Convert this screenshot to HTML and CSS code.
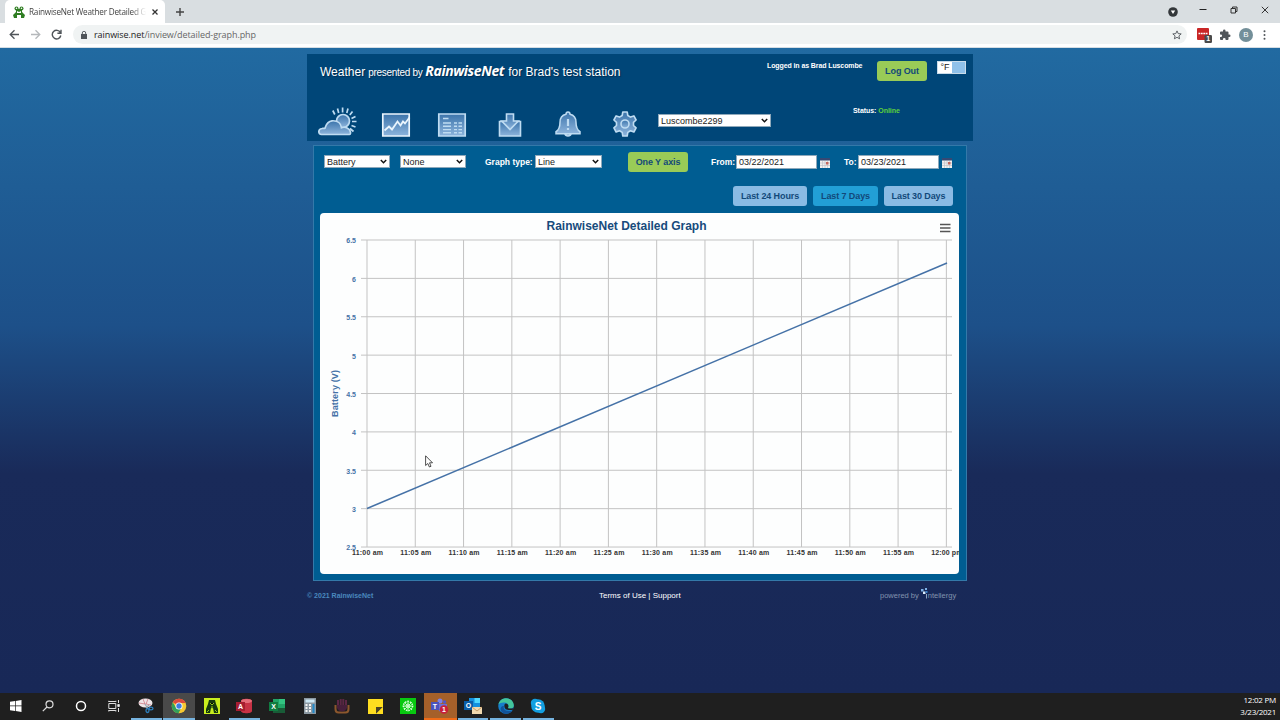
FILE: index.html
```html
<!DOCTYPE html>
<html lang="en">
<head>
    <meta charset="UTF-8">
    <title>RainwiseNet Weather Detailed Graph</title>
    <link rel="stylesheet" href="styles.css">
</head>
<body>
    <!-- Browser tabs -->
    <div class="tabstrip">
        <div class="tab">
            <svg class="favicon" width="12" height="12" viewBox="0 0 12 12"><g fill="#2f7d22"><circle cx="3.5" cy="2.5" r="2"/><circle cx="8.5" cy="2.5" r="2"/><path d="M3 3h6v3l3 3-1 3H8V9H4v3H1L0 9l3-3z"/></g><path d="M4 5l2 1 2-1v2H4z" fill="#fff"/><circle cx="3.5" cy="2.3" r=".8" fill="#fff"/><circle cx="8.5" cy="2.3" r=".8" fill="#fff"/></svg>
            <span class="tab-title">RainwiseNet Weather Detailed G</span>
            <svg width="8" height="8" viewBox="0 0 8 8" stroke="#333" stroke-width="1.3"><path d="M1.5 1.5l5 5M6.5 1.5l-5 5"/></svg>
        </div>
        <svg class="new-tab" width="10" height="10" viewBox="0 0 10 10" stroke="#444" stroke-width="1.4"><path d="M5 1v8M1 5h8"/></svg>
        <div class="window-buttons">
            <svg width="10" height="10" viewBox="0 0 10 10"><circle cx="5" cy="5" r="4.8" fill="#33373a"/><path d="M2.8 3.5h4.4L5 7z" fill="#fff"/></svg>
            <svg width="8" height="10" viewBox="0 0 8 10" stroke="#222"><path d="M.5 4.5h7"/></svg>
            <svg width="8" height="8" viewBox="0 0 8 8" fill="none" stroke="#333"><path d="M1 2.5h4.5v4.5H1zM2.5 2.5V1H7v4.5H5.5"/></svg>
            <svg width="8" height="8" viewBox="0 0 8 8" stroke="#333"><path d="M.8.8l6.4 6.4M7.2.8L.8 7.2"/></svg>
        </div>
    </div>

    <!-- Address bar -->
    <div class="toolbar">
        <svg width="11" height="11" viewBox="0 0 11 11" fill="none" stroke="#50555a" stroke-width="1.3"><path d="M10 5.5H1.5M5.5 1.2L1.2 5.5l4.3 4.3"/></svg>
        <svg width="11" height="11" viewBox="0 0 11 11" fill="none" stroke="#b5b8bb" stroke-width="1.3"><path d="M1 5.5h8.5M5.5 1.2l4.3 4.3-4.3 4.3"/></svg>
        <svg width="11" height="11" viewBox="0 0 11 11" fill="none" stroke="#50555a" stroke-width="1.4"><path d="M9.4 3.6A4.3 4.3 0 1 0 9.8 6.5M10 .7v3.5H6.4"/></svg>
        <div class="address">
            <svg width="6" height="8" viewBox="0 0 6 8"><path d="M0 3h6v5H0z" fill="#50555a"/><path d="M1.3 3V2a1.7 1.7 0 0 1 3.4 0v1" fill="none" stroke="#50555a" stroke-width=".9"/></svg>
            <span class="url"><b>rainwise.net</b>/inview/detailed-graph.php</span>
            <svg class="star" width="10" height="10" viewBox="0 0 10 10" fill="none" stroke="#50555a" stroke-width=".9"><path d="M5 .9l1.2 2.7 3 .3-2.3 2 .7 2.9L5 7.3 2.4 8.8l.7-2.9-2.3-2 3-.3z"/></svg>
        </div>
        <svg class="ext" width="16" height="16" viewBox="0 0 16 16"><rect width="12" height="12" y="1" rx="1" fill="#c92626"/><path d="M1.5 6.5h9" stroke="#fff" stroke-width="1.4" stroke-dasharray="1.8 .6"/><rect x="7.5" y="8" width="7.5" height="8" rx="1.2" fill="#4a4a4a"/><text x="11.2" y="14.4" text-anchor="middle" class="ext-count">1</text></svg>
        <svg class="puzzle" width="12" height="12" viewBox="0 0 24 24" fill="#50555a"><path d="M20.5 11H19V7a2 2 0 0 0-2-2h-4V3.5a2.5 2.5 0 0 0-5 0V5H4a2 2 0 0 0-2 2v3.8h1.5a2.7 2.7 0 0 1 0 5.4H2V20a2 2 0 0 0 2 2h3.8v-1.5a2.7 2.7 0 0 1 5.4 0V22H17a2 2 0 0 0 2-2v-4h1.5a2.5 2.5 0 0 0 0-5z"/></svg>
        <span class="profile">B</span>
        <svg width="3" height="10" viewBox="0 0 3 10" fill="#50555a"><circle cx="1.5" cy="1.3" r="1"/><circle cx="1.5" cy="5" r="1"/><circle cx="1.5" cy="8.7" r="1"/></svg>
    </div>

    <div class="page">
        <header class="header">
            <div class="header-top">
                <h1><span class="w-weather">Weather</span><span class="w-by">presented by</span><span class="w-brand">RainwiseNet</span><span class="w-station">for Brad's test station</span></h1>
                <span class="login">Logged in as Brad Luscombe</span>
                <button class="btn logout">Log Out</button>
                <div class="units"><span>°F</span><i></i></div>
            </div>
            <nav class="nav">
                <svg width="0" height="0" class="defs"><defs><linearGradient id="ice" x1="0" y1="0" x2="0" y2="1"><stop offset="0" stop-color="#3b74ab"/><stop offset="1" stop-color="#8db4dc"/></linearGradient></defs></svg>
                <svg width="40" height="30" viewBox="0 0 40 30" fill="url(#ice)" stroke="#bfdcf2" stroke-width="1.7"><circle cx="26" cy="14" r="6.5"/><path d="M15.8 3.5l2 4M20.5 1.5l1.2 4.5M25.6.5v5M31 1.5l-1.2 4.5M35.5 4.5l-2.7 3.5M38.5 9.5l-4 2M35 14.5h4.5M34.5 18.5l4 1.5M33 21.5l3.5 3"/><path d="M4.5 27.5C1 27.500.7 22 5 21.500c1-.2 2.200.2 3-.3 1-2.500 1.500-6.700 7-7.400 6-.4 9 3.200 9.500 7 3.500-1.500 8.500.5 9 4.500.1 1.200-.3 2.200-1 2.200z"/></svg>
                <svg width="28" height="24" viewBox="0 0 28 24" fill="url(#ice)" stroke="#eaf5fd" stroke-width="1.7"><path d="M.8 1h26.400v22H.8z"/><path d="M2.500 17.500l4.500-4 3 3 5.500-8 3 4 2.500-4 2 2 4.500-6" fill="none" stroke-width="1.800"/></svg>
                <svg width="28" height="24" viewBox="0 0 28 24" fill="url(#ice)" stroke="#bfdcf2" stroke-width="1.700"><path d="M.8 1h26.400v22H.8z"/><path d="M5 5.500h5.500M5 10h8M5 13.300h8M5 16.600h8M5 19.700h8M16 10h3M20.500 10h3.500M16 13.300h3M20.500 13.300h3.500M16 16.600h3M20.500 16.600h3.500M16 19.700h3M20.500 19.700h3.500" stroke-width="1.400"/></svg>
                <svg width="24" height="24" viewBox="0 0 24 24" fill="url(#ice)" stroke="#bfdcf2" stroke-width="1.600"><path d="M1.500 8.500h21V23h-21z"/><path d="M8.500 1h7v7h4.800L12 16.500 3.700 8h4.800z"/></svg>
                <svg width="26" height="26" viewBox="0 0 26 26" fill="url(#ice)" stroke="#bfdcf2" stroke-width="1.500"><path d="M11 3.200c0-3 4-3 4 0 4.500 1 6 4 6 8 0 5 1 7.500 4 9.500v2H1v-2c3-2 4-4.500 4-9.500 0-4 1.500-7 6-8z"/><path d="M10 23c.5 2.500 5.500 2.500 6 0z"/><path d="M13 8v7M13 17v2" stroke-width="2.200"/></svg>
                <svg width="26" height="26" viewBox="0 0 26 26" fill="url(#ice)" stroke="#bfdcf2" stroke-width="1.600" stroke-linejoin="round"><path d="M10.800 1h4.400l.6 3.500 2.700 1.600 3.400-1.200L24.100 9l-2.600 2.300v3.200l2.600 2.400-2.200 4.100-3.400-1.300-2.700 1.700-.6 3.600h-4.400l-.6-3.600-2.700-1.700L4.100 21l-2.200-4.100 2.600-2.400v-3.200L1.900 9l2.200-4.100 3.400 1.200 2.700-1.600z"/><circle cx="13" cy="13" r="4"/></svg>
                <div class="select station"><span>Luscombe2299</span><svg width="7" height="5" viewBox="0 0 7 5"><path d="M.8 1l2.700 2.700L6.200 1"/></svg></div>
                <div class="status">Status: <em>Online</em></div>
            </nav>
        </header>

        <main class="panel">
            <div class="filters">
                <div class="select"><span>Battery</span><svg width="7" height="5" viewBox="0 0 7 5"><path d="M.8 1l2.700 2.700L6.200 1"/></svg></div>
                <div class="select second"><span>None</span><svg width="7" height="5" viewBox="0 0 7 5"><path d="M.8 1l2.700 2.700L6.200 1"/></svg></div>
                <label class="type-label">Graph type:</label>
                <div class="select line-type"><span>Line</span><svg width="7" height="5" viewBox="0 0 7 5"><path d="M.8 1l2.700 2.700L6.200 1"/></svg></div>
                <button class="btn axis">One Y axis</button>
                <label class="from-label">From:</label>
                <div class="date">03/22/2021</div>
                <svg class="cal" width="10" height="10" viewBox="0 0 10 10"><path fill="#f2f0ee" d="M0 0h10v10H0z"/><path fill="#354873" d="M0 0h10v2.500H0z"/><path d="M0 5h10M0 7.500h10M2.500 3v7M5 3v7M7.500 3v7" stroke="#b9bdc6" stroke-width=".6"/><path fill="#c4665c" d="M6 4h2.500v2.500H6z"/></svg>
                <label class="to-label">To:</label>
                <div class="date">03/23/2021</div>
                <svg class="cal" width="10" height="10" viewBox="0 0 10 10"><path fill="#f2f0ee" d="M0 0h10v10H0z"/><path fill="#354873" d="M0 0h10v2.500H0z"/><path d="M0 5h10M0 7.500h10M2.500 3v7M5 3v7M7.500 3v7" stroke="#b9bdc6" stroke-width=".6"/><path fill="#c4665c" d="M6 4h2.500v2.500H6z"/></svg>
            </div>
            <div class="ranges">
                <button class="btn range hours">Last 24 Hours</button>
                <button class="btn range active">Last 7 Days</button>
                <button class="btn range month">Last 30 Days</button>
            </div>
            <div class="chart">
                <svg id="graph" width="639" height="361" viewBox="320 213 639 361">
                    <text class="chart-title" x="626.5" y="230" text-anchor="middle" textLength="160">RainwiseNet Detailed Graph</text>
                    <path d="M940 224.500h10.500M940 228h10.500M940 231.500h10.500" stroke="#555" stroke-width="1.700"/>
                    <g id="grid"></g>
                    <path d="M367 508.500L947 263" stroke="#4572a7" stroke-width="1.500"/>
                    <text class="axis-title" transform="translate(338 393.500) rotate(-90)" text-anchor="middle" textLength="47">Battery (V)</text>
                </svg>
            </div>
        </main>

        <footer class="footer">
            <span class="copy">© 2021 RainwiseNet</span>
            <span class="links">Terms of Use | Support</span>
            <span class="powered">powered by <svg width="7" height="11" viewBox="0 0 7 11"><path fill="#7fb2e6" d="M0 1h2.500v2.500H0zM4 0h2v2H4z"/><path fill="#dcecfb" d="M2 3.500h2.500V6H2z"/><path fill="#3d7fc4" d="M4.500 3h2v2h-2z"/><path fill="#8fa3bd" d="M5 6h1v4.500H5z"/></svg>ntellergy</span>
        </footer>
    </div>

    <!-- Taskbar -->
    <div class="taskbar">
        <div class="app"><svg width="12" height="12" viewBox="0 0 12 12" fill="#fff"><path d="M0 1.700l5-.7v4.600H0zM5.700.9L11.500 0v5.600H5.700zM0 6.300h5V11l-5-.7zM5.700 6.300h5.800V12l-5.800-.9z"/></svg></div>
        <div class="app"><svg width="12" height="12" viewBox="0 0 12 12" fill="none" stroke="#ddd" stroke-width="1.200"><circle cx="7.500" cy="4.300" r="3.500"/><path d="M5 7L.8 11.200"/></svg></div>
        <div class="app"><svg width="12" height="12" viewBox="0 0 12 12" fill="none" stroke="#fff" stroke-width="1.500"><circle cx="6" cy="6" r="4.500"/></svg></div>
        <div class="app"><svg width="12" height="12" viewBox="0 0 12 12" fill="none" stroke="#ddd"><path d="M.8 3.500h7v5h-7zM.8 2V.8M7.800 2V.8M.8 1.500h7M.8 10.500h7M.8 10v1.500M7.800 10v1.500M10.500 0v3M10.500 8v4"/><path d="M9.800 4.500h1.500v2H9.800z" fill="#fff"/></svg></div>
        <div class="app open"><svg width="16" height="16" viewBox="0 0 16 16"><ellipse cx="7.500" cy="5" rx="7" ry="4.500" fill="#eee6e8"/><path d="M5 1l2 5M10 1L8 6M1 5l6 1M8 6l5 1" stroke="#c55563" stroke-width=".6"/><path d="M7 6l3 5M11 7l-3 3" stroke="#9aa6b0" stroke-width="1.200"/><g fill="none" stroke="#2c7fbe" stroke-width="1.300"><ellipse cx="9.500" cy="12.500" rx="1.500" ry="2"/><ellipse cx="13" cy="10.500" rx="2" ry="1.300"/></g></svg></div>
        <div class="app open current"><svg width="16" height="16" viewBox="0 0 16 16"><circle cx="8" cy="8" r="7.300" fill="#f7c831"/><path d="M8 8L1.700 4.300A7.300 7.300 0 0 1 14.700 5H8z" fill="#dd4b3e"/><path d="M1.700 4.300A7.300 7.300 0 0 0 7.500 15.300L10.500 9.500 5 9.500z" fill="#33a05a"/><circle cx="8" cy="8" r="3.500" fill="#fff"/><circle cx="8" cy="8" r="2.700" fill="#3f7de0"/></svg></div>
        <div class="app"><svg width="16" height="16" viewBox="0 0 16 16"><path fill="#c9ee1e" d="M0 0h16v16H0z"/><path d="M5 2h6l1 4 2 5v4h-4l-1-5H7l-1 5H2v-4l2-5z" fill="#15390e"/><path d="M6 5l2 2 2-2M5 12l-2 2M11 12l2 2M8 8v3" stroke="#8fc51d"/></svg></div>
        <div class="app open"><svg width="16" height="16" viewBox="0 0 16 16"><path fill="#c73245" d="M5 3c0-3 11-3 11 0v10c0 3-11 3-11 0z"/><ellipse cx="10.500" cy="3" rx="5.500" ry="2" fill="#e46c79"/><path fill="#a61d31" d="M0 4h9v9H0z"/><text class="logo" x="4.500" y="11.200">A</text></svg></div>
        <div class="app"><svg width="16" height="16" viewBox="0 0 16 16"><path fill="#21a366" d="M4 1h12v14H4z"/><path fill="#33c481" d="M10 1h6v5h-6z"/><path fill="#185c37" d="M4 10h12v5H4z"/><path fill="#107c41" d="M0 4h9v9H0z"/><text class="logo" x="4.500" y="11.200">X</text></svg></div>
        <div class="app"><svg width="14" height="16" viewBox="0 0 14 16"><path fill="#8b98a2" d="M1 0h12v16H1z"/><path fill="#cce8f5" d="M2.500 1.500h9v3h-9z"/><path d="M3.500 6v9M7 6v9" stroke="#f4f4f4" stroke-width="2" stroke-dasharray="2 1"/><path d="M10.500 6v9" stroke="#2189c8" stroke-width="2"/></svg></div>
        <div class="app"><svg width="16" height="16" viewBox="0 0 16 16"><path d="M1.500 7v4q0 3.500 3 3.500h7q3 0 3-3.500V7" fill="none" stroke="#8c572d" stroke-width="2"/><path d="M4 2v7M6.700 1v8M9.300 1v8M12 2v7" stroke="#5c2745" stroke-width="2"/><path d="M3 7h10v3q-2 3.500-5 3.500T3 10z" fill="#461f3b"/></svg></div>
        <div class="app"><svg width="15" height="15" viewBox="0 0 15 15"><path fill="#ffde20" d="M0 0h15v15H0z"/><path fill="#4c4426" d="M8 8h7l-7 7z"/><path fill="#ffde20" d="M15 8v7H8z"/></svg></div>
        <div class="app"><svg width="16" height="16" viewBox="0 0 16 16" stroke="#d9ffd9" fill="none"><path fill="#08c910" stroke="none" d="M0 0h16v16H0z"/><circle cx="8" cy="8" r="2"/><circle cx="8" cy="8" r="4.500" stroke-width="1.500" stroke-dasharray="1.500 1"/><path d="M8 2.500v11M2.500 8h11M4 4l8 8M12 4l-8 8" stroke-width=".7"/></svg></div>
        <div class="app teams"><svg width="18" height="16" viewBox="0 0 18 16"><circle cx="9" cy="3" r="2.500" fill="#7b83eb"/><circle cx="13.500" cy="4" r="1.700" fill="#5059c9"/><path fill="#6a70d4" d="M6 6h10v5q-3 5-8 2z"/><path fill="#4b53bc" d="M0 4h8v8H0z"/><text class="logo" x="4" y="10.600">T</text><circle cx="13" cy="11.500" r="4.300" fill="#c81f3b"/><text class="logo" x="13" y="14">1</text></svg></div>
        <div class="app open"><svg width="18" height="16" viewBox="0 0 18 16"><path fill="#1490df" d="M5 0h11v11H5z"/><path fill="#50d9ff" d="M10.500 0H16v5h-5.500z"/><path fill="#0a5ea8" d="M0 3h9v9H0z"/><text class="logo" x="4.500" y="10.200">O</text><path fill="#f2d9ae" d="M8 9h10v7H8z"/><path d="M8 9l5 4 5-4" fill="none" stroke="#b88d58" stroke-width=".8"/></svg></div>
        <div class="app open"><svg width="16" height="16" viewBox="0 0 16 16"><circle cx="8" cy="8" r="7.800" fill="#167fca"/><path d="M.5 6.500C2-2 15-1.500 15.800 7c.2 3-2.800 4.500-6 3 1.500-2.500.5-5-3-5.500C4 4.200 1.500 5 .5 6.500z" fill="#43c59b"/><path d="M6 8c-1.500 3 1.500 6.500 8.500 4.500C11 17.500 3 16.500 2.500 11 2.500 9 4 7.500 6 8z" fill="#115399"/><path d="M9.800 10c1.500-2 .2-4.500-2-4.500C6 6 5.800 9 7.500 11c2 1.300 5 1.300 7.500.7l.5-1.700c-2 .8-4 .8-5.700 0z" fill="#1f1f1f"/></svg></div>
        <div class="app open"><svg width="16" height="16" viewBox="0 0 16 16" fill="#139fe0"><circle cx="8" cy="8" r="6.800"/><circle cx="5" cy="5" r="4.200"/><circle cx="11" cy="11" r="4.200"/><text class="logo big" x="8" y="11.700">S</text></svg></div>
        <div class="clock">12:02 PM<br>3/23/2021</div>
    </div>

    <svg class="cursor" width="9" height="13" viewBox="0 0 9 13"><path d="M.6.800v9.700l2.200-2 1.600 3.500 1.600-.7-1.500-3.500h3z" fill="#fff" stroke="#222" stroke-width=".8"/></svg>

    <script>
        // Grid lines and axis labels
        const grid = document.getElementById("grid");
        let out = "";
        for (let i = 0; i <= 12; i++) {
            const x = 367 + i * 48.28;
            const label = i === 12 ? "12:00 pm" : "11:" + String(i * 5).padStart(2, "0") + " am";
            out += `<path class="line" d="M${x} 240V547"/><text class="x-label" x="${x + .5}" y="555" textLength="31">${label}</text>`;
        }
        for (let i = 0; i <= 8; i++) {
            const y = 240 + i * 38.38;
            out += `<path class="line" d="M361 ${y}H952"/><text class="y-label" x="356" y="${y + 3.4}">${6.5 - i * .5}</text>`;
        }
        grid.innerHTML = out;
    </script>
</body>
</html>
```
FILE: styles.css
```css
* {
    box-sizing: border-box;
}

body {
    margin: 0;
    width: 1280px;
    height: 720px;
    overflow: hidden;
    display: flex;
    flex-direction: column;
    font-family: "Liberation Sans", Arial, sans-serif;
}

svg {
    flex: none;
    display: block;
}

span, label, button {
    white-space: nowrap;
}

/* Browser */
.tabstrip {
    display: flex;
    align-items: center;
    height: 23px;
    flex: none;
    background: #d9dee1;
    padding-left: 5px;
}

.tab {
    display: flex;
    align-items: center;
    width: 160px;
    height: 23px;
    padding: 0 6px 0 8px;
    background: #fff;
    border-radius: 5px 5px 0 0;
}

.tab-title {
    width: 117px;
    margin: -1px 5px 0 4px;
    overflow: hidden;
    font: 8.2px "Open Sans", sans-serif;
    letter-spacing: -.22px;
    color: #444;
    -webkit-mask-image: linear-gradient(90deg, #000 88%, transparent);
}

.new-tab {
    margin-left: 10px;
}

.window-buttons {
    display: flex;
    align-items: center;
    gap: 23px;
    margin: -3px 11px 0 auto;
}

.window-buttons svg:first-child {
    margin: 3px -2px 0 0;
}

.toolbar {
    display: flex;
    align-items: center;
    height: 25px;
    flex: none;
    padding: 0 13px 1px 9px;
    gap: 10px;
    background: #fff;
    border-bottom: 1px solid #d5dde3;
}

.address {
    display: flex;
    align-items: center;
    width: 1114px;
    height: 19px;
    margin-left: 1px;
    padding: 0 5px 0 8px;
    border-radius: 10px;
    background: #f0f3f3;
}

.url {
    margin-left: 7px;
    font: 9px "Open Sans", sans-serif;
    letter-spacing: -.07px;
    color: #666;
}

.url b {
    font-weight: normal;
    color: #222;
}

.star {
    margin-left: auto;
}

.ext {
    margin-left: 0;
}

.puzzle {
    margin-left: -4px;
}

.ext-count {
    font-size: 7px;
    font-weight: bold;
    fill: #fff;
}

.profile {
    width: 14px;
    height: 14px;
    margin: 0 0 0 -2px;
    border-radius: 50%;
    background: #738f99;
    color: #fff;
    font-size: 8px;
    line-height: 14px;
    text-align: center;
}

/* Page */
.page {
    flex: 1;
    display: flex;
    flex-direction: column;
    align-items: center;
    padding-top: 6px;
    background: linear-gradient(#216aa1, #1d5089 43%, #192a59 66%, #182857);
}

.header {
    width: 666px;
    height: 87px;
    background: #004678;
}

.header-top {
    display: flex;
    align-items: flex-start;
    height: 51px;
    padding: 6px 7px 0 13px;
}

h1 {
    display: flex;
    align-items: baseline;
    width: 447px;
    margin: 3px 0 0;
    font-size: 12px;
    font-weight: normal;
    color: #fff;
    text-shadow: 1px 1px 1px #002b50;
}

.w-by {
    margin-left: 3px;
    font-size: 10px;
    letter-spacing: -.3px;
}

.w-brand {
    margin: 0 4px 0 3px;
    font: italic bold 14px/16px "Open Sans", sans-serif;
    letter-spacing: -.4px;
}

.login {
    width: 110px;
    margin-top: 2px;
    font-size: 7px;
    letter-spacing: -.1px;
    font-weight: bold;
    color: #fff;
}

.btn {
    padding: 0;
    border: 0;
    border-radius: 3px;
    background: #99cb57;
    color: #12497a;
    font: bold 9px "Liberation Sans", Arial, sans-serif;
    letter-spacing: -.1px;
    height: 20px;
    flex: none;
}

.logout {
    width: 50px;
    margin-top: 1px;
}

.units {
    display: flex;
    width: 29px;
    height: 13px;
    margin: 1px 0 0 10px;
    border: 1px solid #c9dcea;
    background: #8fc1ea;
    font-size: 9px;
    line-height: 11px;
    color: #222;
}

.units span {
    width: 14px;
    background: #fff;
    text-align: center;
}

.nav {
    display: flex;
    align-items: flex-end;
    height: 31px;
    padding-left: 10px;
}

.nav > svg {
    margin-right: 25px;
    margin-bottom: -1px;
    overflow: visible;
}

.nav > .defs {
    margin: 0;
}

.nav > svg:nth-of-type(3) {
    margin-right: 28px;
}

.nav > svg:nth-of-type(4) {
    margin-right: 32px;
}

.nav > svg:nth-of-type(5) {
    margin-right: 33px;
}

.nav > svg:nth-of-type(6) {
    margin-right: 31px;
}

.nav > svg:nth-of-type(7) {
    margin-right: 20px;
}

.select {
    display: flex;
    align-items: center;
    justify-content: space-between;
    width: 67px;
    height: 13px;
    padding: 0 2px;
    border: 1px solid #8fa9bb;
    background: #fff;
    font-size: 9px;
    color: #222;
}

.select svg {
    fill: none;
    stroke: #111;
    stroke-width: 1.5px;
}

.station {
    width: 113px;
    margin-bottom: 9px;
}

.status {
    margin: 0 0 22px 82px;
    font-size: 7px;
    letter-spacing: -.05px;
    font-weight: bold;
    color: #fff;
}

.status em {
    font-style: normal;
    color: #5ed13c;
}

.panel {
    width: 654px;
    height: 436px;
    margin-top: 4px;
    padding: 6px;
    border: 1px solid #3479a9;
    background: #005d92;
}

.filters {
    display: flex;
    align-items: center;
    height: 20px;
    padding-left: 4px;
}

.filters .select {
    width: 66px;
    margin-bottom: 1px;
}

.filters .second {
    margin-left: 10px;
}

.filters .line-type {
    width: 67px;
}

label {
    font-size: 8.5px;
    font-weight: bold;
    color: #fff;
}

.type-label {
    width: 46px;
    margin: 0 4px 0 19px;
}

.axis {
    width: 60px;
    margin-left: 26px;
}

.from-label {
    width: 25px;
    margin-left: 23px;
}

.to-label {
    width: 14px;
    margin-left: 14px;
}

.date {
    width: 81px;
    height: 14px;
    padding-left: 2px;
    border: 1px solid #8fa9bb;
    background: #fff;
    font-size: 9px;
    line-height: 13px;
    color: #222;
}

.cal {
    margin: 1px 0 0 3px;
}

.ranges {
    display: flex;
    justify-content: flex-end;
    gap: 6px;
    margin-top: 14px;
    padding-right: 7px;
}

.range {
    width: 65px;
    background: #8abbe4;
}

.hours {
    width: 74px;
}

.month {
    width: 69px;
}

.range.active {
    background: #229fd6;
}

.chart {
    width: 639px;
    height: 361px;
    margin-top: 7px;
    border-radius: 4px;
    background: #fdfefe;
    overflow: hidden;
}

.chart text {
    font-weight: bold;
}

.chart-title {
    font-size: 12px;
    fill: #174b7c;
}

.axis-title {
    font-size: 9px;
    fill: #4572a7;
}

.line {
    stroke: #c3c3c3;
}

.x-label {
    font-size: 7px;
    text-anchor: middle;
    fill: #333;
}

.y-label {
    font-size: 7px;
    text-anchor: end;
    fill: #4572a7;
}

.footer {
    display: flex;
    width: 666px;
    margin-top: 10px;
    font-size: 7px;
    line-height: 9px;
}

.copy {
    width: 292px;
    font-weight: bold;
    color: #4a88bd;
}

.links {
    width: 281px;
    font-size: 8px;
    color: #fff;
}

.powered {
    display: flex;
    font-size: 7.5px;
    color: #8293ae;
}

.powered svg {
    margin: -3px 0 0 2px;
}

/* Taskbar */
.taskbar {
    display: flex;
    height: 27px;
    flex: none;
    background: #1f1f1f;
}

.app {
    display: flex;
    align-items: center;
    justify-content: center;
    width: 32.7px;
    padding-top: 1px;
    border-bottom: 2px solid transparent;
}

.app:first-child {
    width: 31.8px;
}

.app.open {
    border-image: linear-gradient(90deg, transparent 8%, #76b3df 8% 92%, transparent 92%) 2;
}

.app.current {
    background: #494949;
    border-image: none;
    border-color: #76b3df;
}

.app.teams {
    background: #a5602a;
    border-color: #f06b17;
}

.logo {
    font: bold 7px "Liberation Sans", Arial, sans-serif;
    fill: #fff;
    text-anchor: middle;
}

.logo.big {
    font-size: 10px;
}

.clock {
    margin-left: auto;
    padding: 1px 4px 0 0;
    font: 8px/12px "Open Sans", sans-serif;
    letter-spacing: -.25px;
    text-align: right;
    color: #fff;
}

.cursor {
    position: absolute;
    left: 425px;
    top: 455px;
}
```
